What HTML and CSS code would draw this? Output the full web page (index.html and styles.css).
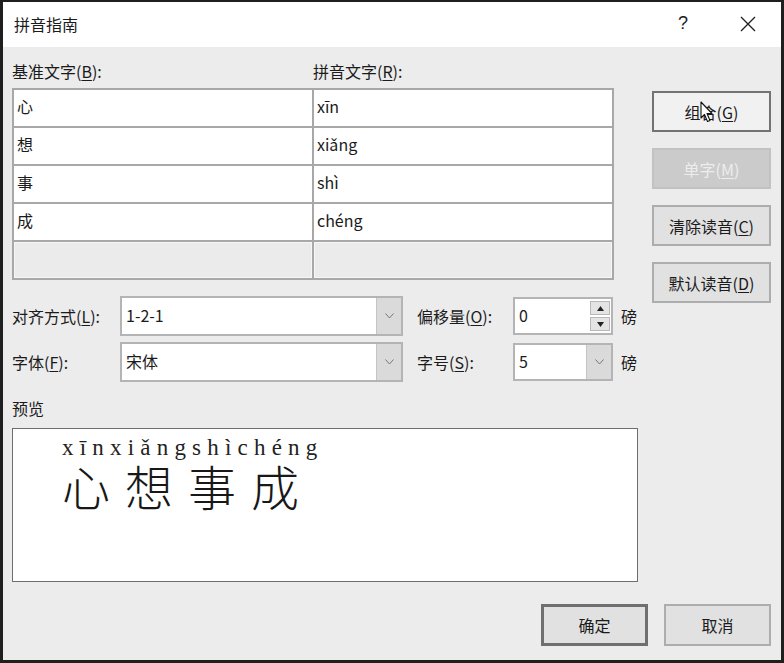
FILE: index.html
```html
<!DOCTYPE html>
<html lang="zh-CN">
<head>
    <meta charset="UTF-8" />
    <title>拼音指南</title>
    <link rel="stylesheet" href="styles.css">
</head>
<body>
<div class="dialog">
    <div class="titlebar">
        <span class="title">拼音指南</span>
        <span class="help">?</span>
        <svg class="close" width="16" height="16" viewBox="0 0 16 16">
            <path d="M1 1 L15 15 M15 1 L1 15" stroke="#222" stroke-width="1.4" fill="none" />
        </svg>
    </div>

    <div class="content">
        <div class="main">
            <div class="left">
                <div class="col-labels">
                    <span class="col-label">基准文字(<u>B</u>):</span>
                    <span class="col-label">拼音文字(<u>R</u>):</span>
                </div>

                <div class="grid">
                    <div class="cell">心</div><div class="cell">xīn</div>
                    <div class="cell">想</div><div class="cell">xiǎng</div>
                    <div class="cell">事</div><div class="cell">shì</div>
                    <div class="cell">成</div><div class="cell">chéng</div>
                    <div class="cell empty"></div><div class="cell empty"></div>
                </div>

                <div class="form-row first">
                    <label class="lbl-wide">对齐方式(<u>L</u>):</label>
                    <div class="select wide">
                        <span class="value">1-2-1</span>
                        <span class="arrow">
                            <svg width="9" height="6" viewBox="0 0 9 6"><path d="M0.5 0.5 L4.5 5 L8.5 0.5" stroke="#777" fill="none" /></svg>
                        </span>
                    </div>
                    <label class="lbl-narrow">偏移量(<u>O</u>):</label>
                    <div class="select small">
                        <span class="value">0</span>
                        <span class="spin">
                            <span class="spin-btn"><svg width="7" height="5" viewBox="0 0 7 5"><path d="M0 5 L3.5 0 L7 5 Z" fill="#222" /></svg></span>
                            <span class="spin-btn"><svg width="7" height="5" viewBox="0 0 7 5"><path d="M0 0 L3.5 5 L7 0 Z" fill="#222" /></svg></span>
                        </span>
                    </div>
                    <span class="unit">磅</span>
                </div>

                <div class="form-row">
                    <label class="lbl-wide">字体(<u>F</u>):</label>
                    <div class="select wide">
                        <span class="value">宋体</span>
                        <span class="arrow">
                            <svg width="9" height="6" viewBox="0 0 9 6"><path d="M0.5 0.5 L4.5 5 L8.5 0.5" stroke="#777" fill="none" /></svg>
                        </span>
                    </div>
                    <label class="lbl-narrow">字号(<u>S</u>):</label>
                    <div class="select small">
                        <span class="value">5</span>
                        <span class="arrow">
                            <svg width="9" height="6" viewBox="0 0 9 6"><path d="M0.5 0.5 L4.5 5 L8.5 0.5" stroke="#777" fill="none" /></svg>
                        </span>
                    </div>
                    <span class="unit">磅</span>
                </div>

                <div class="preview-label">预览</div>
                <div class="preview">
                    <div class="ruby">xīnxiǎngshìchéng</div>
                    <div class="base">心想事成</div>
                </div>
            </div>

            <div class="side">
                <button class="btn hot">组合(<u>G</u>)</button>
                <button class="btn disabled">单字(<u>M</u>)</button>
                <button class="btn">清除读音(<u>C</u>)</button>
                <button class="btn">默认读音(<u>D</u>)</button>

                <svg class="cursor" width="14" height="22" viewBox="0 0 14 22">
                    <path d="M1 1 L1 17 L4.5 13.5 L7.5 20.5 L10 19.5 L7 12.5 L12 12.5 Z" fill="#fff" stroke="#111" stroke-width="1.1" stroke-linejoin="round" />
                </svg>
            </div>
        </div>

        <div class="footer">
            <button class="btn action default">确定</button>
            <button class="btn action">取消</button>
        </div>
    </div>
</div>
</body>
</html>
```

FILE: styles.css
```css
:root {
    --face: #ececec;
    --text: #1b1b1b;
    --edge: #a8a8a8;
    --btn-face: #e1e1e1;
    --btn-edge: #adadad;
}

body {
    margin: 0;
    background-color: #1f1f1f;
    font-family: "Noto Sans CJK SC", "Noto Sans", sans-serif;
    font-size: 16px;
    color: var(--text);
}

u {
    text-decoration-thickness: 1px;
    text-underline-offset: 2px;
}

.dialog {
    margin: 2px 3px 0 3px;
    height: 658px;
    background-color: var(--face);
    display: flex;
    flex-direction: column;
}

/* title bar */

.titlebar {
    height: 45px;
    background-color: #fff;
    display: flex;
    align-items: center;
    padding-left: 11px;
    padding-bottom: 2px;
    box-sizing: border-box;
}

.title {
    font-size: 16px;
    flex: 1;
}

.help {
    font-family: "Liberation Sans", sans-serif;
    font-size: 18px;
    margin-right: 52px;
}

.close {
    margin-right: 25px;
}

/* body */

.content {
    padding: 0 10px 0 9px;
    display: flex;
    flex-direction: column;
    flex: 1;
}

.main {
    display: flex;
    gap: 14px;
}

.left {
    width: 626px;
}

.col-labels {
    display: flex;
    height: 20px;
    line-height: 20px;
    margin-top: 14px;
}

.col-label {
    width: 301px;
}

.grid {
    margin-top: 7px;
    width: 598px;
    display: grid;
    grid-template-columns: 298px 298px;
    grid-auto-rows: 36px;
    gap: 2px;
    padding: 2px;
    background-color: var(--edge);
}

.cell {
    background-color: #fff;
    padding: 0 0 5px 3px;
    display: flex;
    align-items: center;
    font-size: 16px;
}

.cell.empty {
    background-color: #ebebeb;
    border: 1px solid #f6f6f6;
}

.form-row {
    display: flex;
    align-items: center;
    margin-top: 6px;
}

.form-row.first {
    margin-top: 16px;
}

.lbl-wide {
    width: 108px;
}

.lbl-narrow {
    width: 96px;
    margin-left: 14px;
}

.select {
    height: 34px;
    border: 2px solid #b4b4b4;
    background-color: #fff;
    display: flex;
    align-items: stretch;
}

.select.wide {
    width: 279px;
    height: 36px;
}

.select.small {
    width: 96px;
}

.value {
    flex: 1;
    display: flex;
    align-items: center;
    padding: 0 0 2px 4px;
}

.arrow {
    width: 24px;
    background-color: #dadada;
    border-left: 1px solid #c4c4c4;
    display: flex;
    align-items: center;
    justify-content: center;
}

.spin {
    width: 20px;
    display: flex;
    flex-direction: column;
    gap: 2px;
    padding: 2px 1px 2px 0;
}

.spin-btn {
    flex: 1;
    background-color: #e4e4e4;
    border: 1px solid #b8b8b8;
    display: flex;
    align-items: center;
    justify-content: center;
}

.unit {
    margin-left: 8px;
}

.preview-label {
    margin-top: 16px;
    height: 20px;
    line-height: 20px;
}

.preview {
    margin-top: 10px;
    height: 152px;
    border: 1px solid #6e6e6e;
    background-color: #fff;
    padding-left: 49px;
}

.ruby {
    font-family: "Liberation Serif", serif;
    font-size: 23px;
    letter-spacing: 6.2px;
    line-height: 22px;
    height: 22px;
    margin-top: 8px;
    color: #222;
}

.base {
    font-size: 48px;
    line-height: 52px;
    letter-spacing: 15px;
    font-weight: 300;
    color: #181818;
}

/* buttons */

.side {
    position: relative;
    width: 119px;
    padding-top: 44px;
    display: flex;
    flex-direction: column;
    gap: 16px;
}

.btn {
    font-family: inherit;
    font-size: 16px;
    color: var(--text);
    height: 41px;
    padding: 0;
    background-color: var(--btn-face);
    border: 2px solid var(--btn-edge);
}

.btn.hot {
    background-color: #f1f1f1;
    border-color: #737373;
}

.btn.disabled {
    background-color: #cbcbcb;
    border-color: #c2c2c2;
    color: #ededed;
}

.cursor {
    position: absolute;
    left: 48px;
    top: 54px;
}

.footer {
    margin-top: auto;
    margin-bottom: 14px;
    display: flex;
    justify-content: flex-end;
    gap: 16px;
}

.btn.action {
    width: 107px;
    height: 42px;
}

.btn.default {
    border: 3px solid #6f6f6f;
}
```
